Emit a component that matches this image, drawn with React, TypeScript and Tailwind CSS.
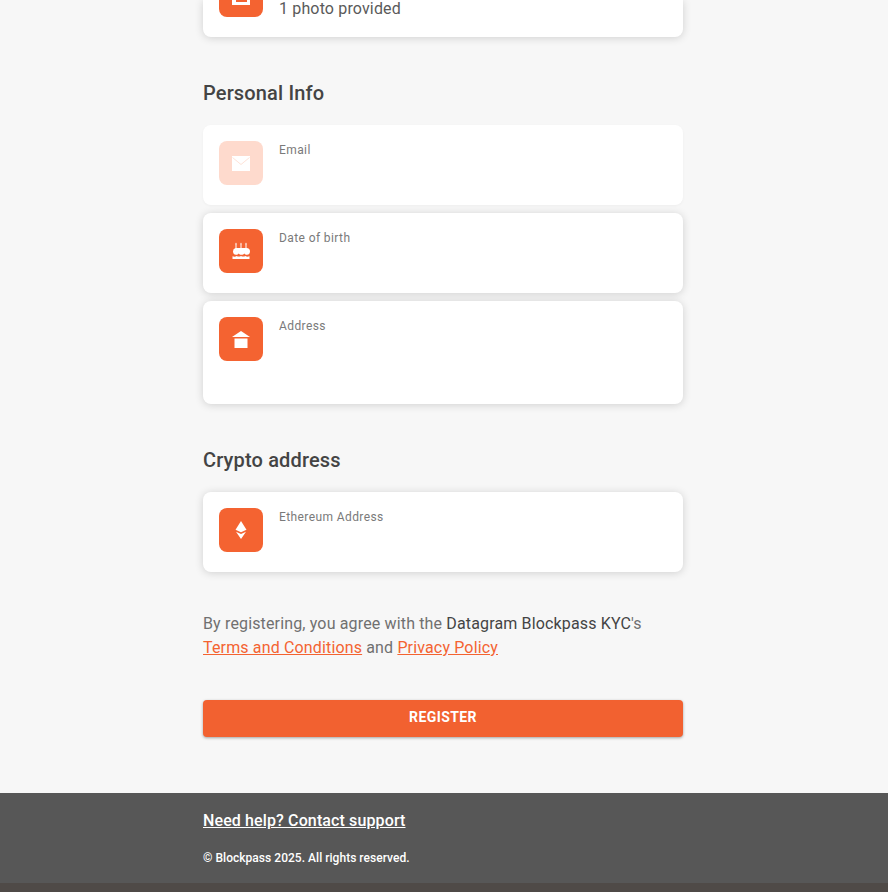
import React from 'react';

const MailIcon = () => (
  <svg width="18" height="15" viewBox="0 0 18 15" fill="none">
    <rect width="18" height="15" fill="#fff" />
    <path d="M0.500 1.500 9 8.500 17.500 1.500" stroke="#fedacd" strokeWidth="0.800" />
  </svg>
);

const CakeIcon = () => (
  <svg width="18" height="18" viewBox="0 0 18 18" fill="#fff">
    <rect x="3.500" y="2.500" width="1" height="4" />
    <rect x="8.500" y="2.500" width="1" height="4" />
    <rect x="13.500" y="2.500" width="1" height="4" />
    <path d="M4 0.400 5 2.600H3zM9 0.400 10 2.600H8zM14 0.400 15 2.600H13z" />
    <path d="M3.500 6h11a3.500 3.500 0 0 1 3.500 3.500c0 2-1.300 3.300-3 3.300-1.200 0-2.200-.6-2.700-1.400-.5.800-1.400 1.400-2.800 1.400s-2.300-.6-2.800-1.400c-.5.800-1.500 1.400-2.700 1.400-1.700 0-3-1.300-3-3.300A3.500 3.500 0 0 1 3.500 6z" />
    <path d="M0.500 14.300c1.500.5 3 .5 4.200-.3 1.300.8 3 .8 4.300 0 1.300.8 3 .8 4.300 0 1.200.8 2.700.8 4.200.3V17h-17z" />
  </svg>
);

const HouseIcon = () => (
  <svg width="18" height="17" viewBox="0 0 18 17" fill="#fff">
    <path d="M9 0 18 6H0z" />
    <rect x="2.500" y="7.500" width="13" height="9.500" />
  </svg>
);

const EthereumIcon = () => (
  <svg width="12" height="18" viewBox="0 0 12 18" fill="#fff">
    <path d="M6 0 11.500 8.700 6 11.200.5 8.700z" />
    <path d="M1 10.800 6 13 11 10.800 6 18z" />
  </svg>
);

const PhotoIcon = () => (
  <div className="w-[18px] h-5 bg-white flex justify-center items-end pb-[3px]">
    <div className="w-[11px] h-3 bg-[#f46331]" />
  </div>
);

function IconBox({ children, faded }: { children: React.ReactNode; faded?: boolean }) {
  return (
    <div className={`w-11 h-11 rounded-lg flex items-center justify-center shrink-0 ${faded ? 'bg-[#fedacd]' : 'bg-[#f46331]'}`}>
      {children}
    </div>
  );
}

function FieldCard({ label, icon, faded, tall }: { label: string; icon: React.ReactNode; faded?: boolean; tall?: boolean }) {
  return (
    <div className={`bg-white rounded-lg p-4 flex gap-4 ${tall ? 'h-[103px]' : 'h-20'} ${faded ? 'shadow-[0_1px_3px_rgba(0,0,0,0.04)]' : 'shadow-[0_1px_8px_rgba(0,0,0,0.16)]'}`}>
      <IconBox faded={faded}>{icon}</IconBox>
      <div className="text-xs leading-[18px] tracking-[0.4px] text-[#7a7a7a]">{label}</div>
    </div>
  );
}

export default function App() {
  return (
    <div className="h-[892px] overflow-hidden bg-[#f7f7f7] font-['Roboto',sans-serif] flex flex-col">
      <main className="w-[480px] ml-[203px] flex-1">
        {/* Identity card, scrolled off the top */}
        <div className="bg-white rounded-b-lg h-[37px] px-4 flex gap-4 shadow-[0_1px_8px_rgba(0,0,0,0.16)] overflow-hidden">
          <div className="-mt-[27px]">
            <IconBox>
              <PhotoIcon />
            </IconBox>
          </div>
          <div className="text-base leading-[18px] text-[#5a5a5a] tracking-[0.15px]">1 photo provided</div>
        </div>

        <h2 className="mt-10 mb-4 text-xl leading-8 font-medium text-[#444444] tracking-[0.15px]">Personal Info</h2>
        <div className="flex flex-col gap-2">
          <FieldCard label="Email" icon={<MailIcon />} faded />
          <FieldCard label="Date of birth" icon={<CakeIcon />} />
          <FieldCard label="Address" icon={<HouseIcon />} tall />
        </div>

        <h2 className="mt-10 mb-4 text-xl leading-8 font-medium text-[#444444] tracking-[0.15px]">Crypto address</h2>
        <FieldCard label="Ethereum Address" icon={<EthereumIcon />} />

        <p className="mt-10 text-base leading-6 tracking-[0.15px] text-[#707070]">
          By registering, you agree with the <span className="text-[#444444]">Datagram Blockpass KYC</span>'s
          <br />
          <a className="text-[#f46331] underline">Terms and Conditions</a> and{' '}
          <a className="text-[#f46331] underline">Privacy Policy</a>
        </p>

        <button className="mt-10 w-full h-[37px] pb-1 rounded bg-[#f26130] text-white text-sm font-bold tracking-[0.4px] shadow-[0_1px_3px_rgba(0,0,0,0.35)]">
          REGISTER
        </button>
      </main>

      <footer className="h-[90px] bg-[#575757] shrink-0">
        <div className="w-[480px] ml-[203px] pt-[18px]">
          <a className="block text-base leading-5 font-medium tracking-[0.12px] text-white underline">Need help? Contact support</a>
          <div className="mt-[18px] text-xs leading-[18px] font-medium tracking-[0.03px] text-white">© Blockpass 2025. All rights reserved.</div>
        </div>
      </footer>
      <div className="h-[9px] bg-[#4f4a47] shrink-0" />
    </div>
  );
}
